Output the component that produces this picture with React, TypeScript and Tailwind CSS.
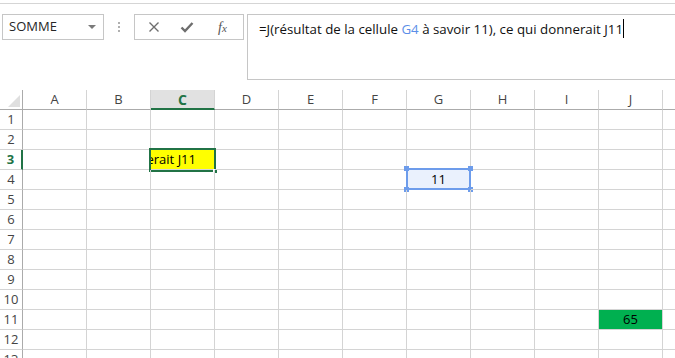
import React from "react";

const cols = ["A", "B", "C", "D", "E", "F", "G", "H", "I", "J"];
const rows = [1, 2, 3, 4, 5, 6, 7, 8, 9, 10, 11, 12, 13];

function Cell({ r, c }: { r: number; c: string }) {
  const base = "relative w-[64px] shrink-0 h-full border-r border-b border-[#d4d4d4]";
  if (r === 3 && c === "C") {
    return (
      <div className={base + " bg-[#ffff00]"}>
        <div className="absolute inset-0 overflow-hidden flex items-center justify-end pr-[18px] text-[13px] text-black whitespace-nowrap">
          <span>donnerait J11</span>
        </div>
        <div className="absolute left-[-2px] top-[-2px] right-[-2px] bottom-[-3px] border-2 border-[#217346] pointer-events-none" />
        <div className="absolute right-[-4px] bottom-[-5px] w-[5px] h-[5px] bg-[#217346] border border-white" />
      </div>
    );
  }
  if (r === 4 && c === "G") {
    return (
      <div className={base + " bg-[#eaf1fd]"}>
        <div className="absolute inset-0 flex items-center justify-center text-[13px] text-black">11</div>
        <div className="absolute left-[-1px] top-[-2px] right-[-1px] bottom-[-1px] border-2 border-[#6d9ceb]" />
        <div className="absolute left-[-3px] top-[-4px] w-[5px] h-[5px] bg-[#6d9ceb]" />
        <div className="absolute right-[-3px] top-[-4px] w-[5px] h-[5px] bg-[#6d9ceb]" />
        <div className="absolute left-[-3px] bottom-[-3px] w-[5px] h-[5px] bg-[#6d9ceb]" />
        <div className="absolute right-[-3px] bottom-[-3px] w-[5px] h-[5px] bg-[#6d9ceb]" />
      </div>
    );
  }
  if (r === 11 && c === "J") {
    return (
      <div className={base + " bg-[#00b050] flex items-center justify-center text-[13px] text-black"}>65</div>
    );
  }
  return <div className={base} />;
}

export default function App() {
  return (
    <div
      className="w-[675px] h-[358px] overflow-hidden bg-white relative"
      style={{ fontFamily: '"Open Sans", "Liberation Sans", sans-serif' }}
    >
      <div className="h-[3px]" />
      <div className="h-px bg-[#d5d5d5]" />
      {/* formula bar */}
      <div className="flex items-start pt-[10px] h-[86px]">
        <div className="ml-[2px] w-[102px] h-[26px] border border-[#c6c6c6] flex items-center pl-[6px] pr-[6px] justify-between">
          <span className="text-[13px] text-[#262626]">SOMME</span>
          <svg width="8" height="5" viewBox="0 0 8 5" className="mr-[1px]">
            <path d="M0 0 L8 0 L4 4 Z" fill="#7a7a7a" />
          </svg>
        </div>
        <div className="w-[30px] h-[26px] flex flex-col items-center justify-center gap-[2px]">
          <div className="w-[2px] h-[2px] bg-[#b0b0b0]" />
          <div className="w-[2px] h-[2px] bg-[#b0b0b0]" />
          <div className="w-[2px] h-[2px] bg-[#b0b0b0]" />
        </div>
        <div className="w-[110px] h-[26px] border border-[#c6c6c6] flex items-center">
          <svg width="12" height="12" viewBox="0 0 12 12" className="ml-[13px]">
            <path d="M1.5 1.5 L10.5 10.5 M10.5 1.5 L1.5 10.5" stroke="#6e6e6e" strokeWidth="1.4" />
          </svg>
          <svg width="14" height="12" viewBox="0 0 14 12" className="ml-[20px]">
            <path d="M1.5 6.5 L5 10 L12.5 2" stroke="#6e6e6e" strokeWidth="2.4" fill="none" />
          </svg>
          <span
            className="ml-[24px] text-[14px] italic text-[#555]"
            style={{ fontFamily: '"Liberation Serif", serif' }}
          >
            f<span className="text-[11px]">x</span>
          </span>
        </div>
        <div className="ml-[3px] flex-1 h-[66px] border-l border-t border-b border-[#c6c6c6] pl-[11px] pt-[1px]">
          <span className="text-[13.3px] text-[#111] whitespace-nowrap">
            =J(résultat de la cellule <span className="text-[#5b8fe8]">G4</span> à savoir 11), ce qui donnerait J11
          </span>
          <span className="inline-block w-px h-[19px] bg-black align-middle -mt-[2px]" />
        </div>
      </div>
      {/* grid */}
      <div className="text-[13px]">
        <div className="flex h-[20px]">
          <div className="relative w-[23px] shrink-0 h-full border-r border-b border-[#ababab] bg-white">
            <svg width="12" height="12" viewBox="0 0 12 12" className="absolute right-[2px] bottom-[2px]">
              <path d="M12 0 L12 12 L0 12 Z" fill="#dfdfdf" />
            </svg>
          </div>
          {cols.map((c) =>
            c === "C" ? (
              <div
                key={c}
                className="w-[64px] shrink-0 h-full border-r border-[#d4d4d4] border-b-2 border-b-[#217346] bg-[#e1e1e1] flex items-center justify-center font-bold text-[#217346] text-[14px]"
              >
                {c}
              </div>
            ) : (
              <div
                key={c}
                className="w-[64px] shrink-0 h-full border-r border-[#d4d4d4] border-b border-b-[#ababab] flex items-center justify-center text-[#444]"
              >
                {c}
              </div>
            )
          )}
          <div className="flex-1 h-full border-b border-[#ababab]" />
        </div>
        {rows.map((r) => (
          <div key={r} className="flex h-[20px]">
            {r === 3 ? (
              <div className="w-[23px] shrink-0 h-full border-r-2 border-r-[#217346] border-b border-b-[#d4d4d4] flex items-center justify-center font-bold text-[#217346] text-[13px] leading-none bg-white">
                {r}
              </div>
            ) : (
              <div className="w-[23px] shrink-0 h-full border-r border-r-[#ababab] border-b border-b-[#d4d4d4] flex items-center justify-center text-[#444] leading-none">
                {r}
              </div>
            )}
            {cols.map((c) => (
              <Cell key={c} r={r} c={c} />
            ))}
            <div className="flex-1 h-full border-b border-[#d4d4d4]" />
          </div>
        ))}
      </div>
    </div>
  );
}
